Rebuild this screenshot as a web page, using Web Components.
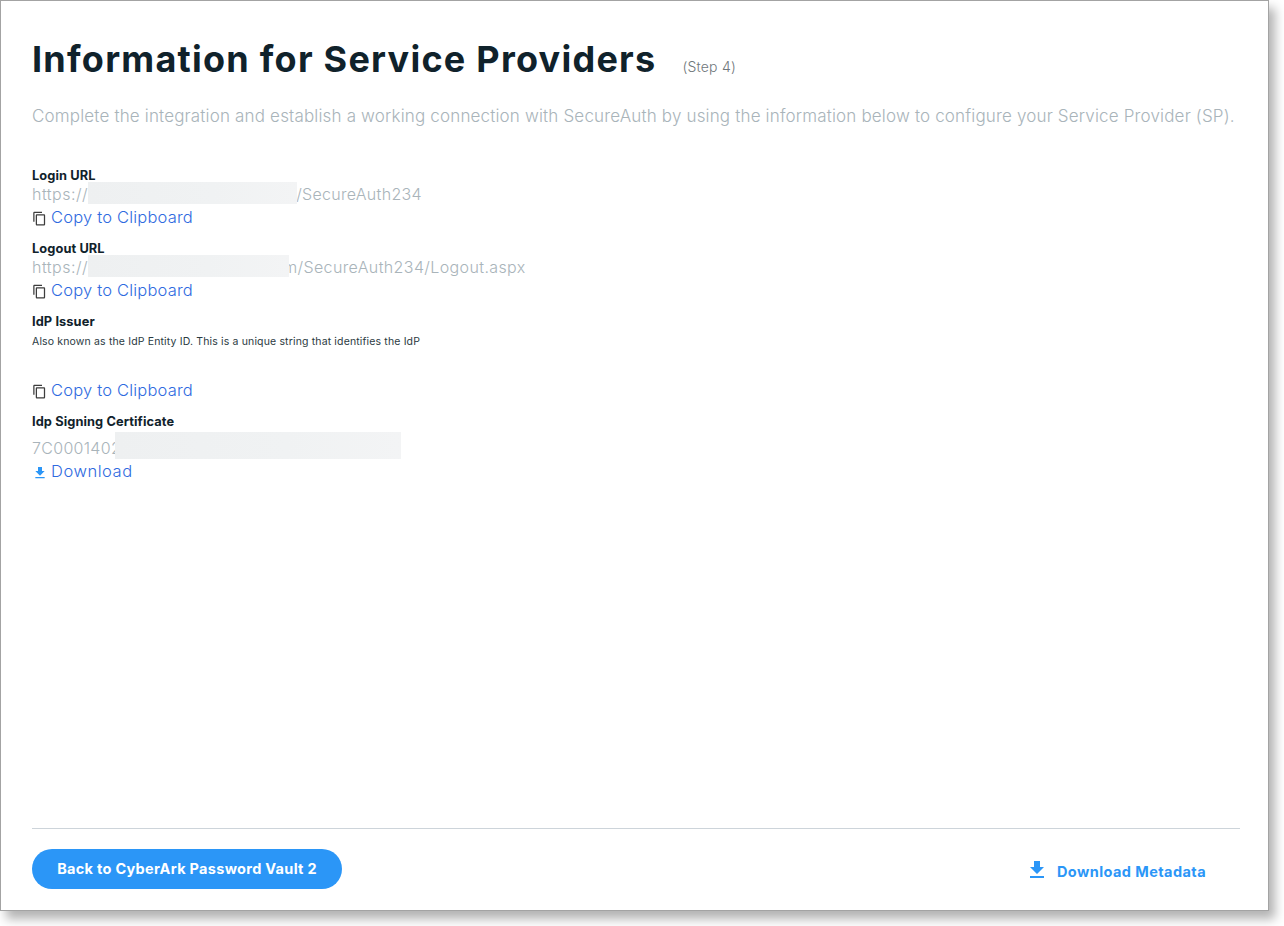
<!DOCTYPE html>
<html>
<head>
<meta charset="utf-8">
<title>Information for Service Providers</title>
<style>
  html, body { margin: 0; padding: 0; background: #fff; }
  body { height: 926px; font-family: Inter, "Liberation Sans", sans-serif; }
</style>
</head>
<body>
<sp-page>
  <span slot="title">Information for Service Providers</span>
  <span slot="step">(Step 4)</span>
  <span slot="intro">Complete the integration and establish a working connection with SecureAuth by using the information below to configure your Service Provider (SP).</span>

  <sp-field label="Login URL">
    <sp-value><span style="letter-spacing:.5px">https://</span><sp-blur width="209" left="56"></sp-blur><span style="margin-left:208px">/SecureAuth234</span></sp-value>
    <sp-link icon="copy">Copy to Clipboard</sp-link>
  </sp-field>
  <sp-field label="Logout URL">
    <sp-value><span style="letter-spacing:.5px">https://</span><sp-blur width="201" left="56"></sp-blur><span style="margin-left:195px;letter-spacing:.38px">m/SecureAuth234/Logout.aspx</span></sp-value>
    <sp-link icon="copy">Copy to Clipboard</sp-link>
  </sp-field>
  <sp-field label="IdP Issuer" hint="Also known as the IdP Entity ID. This is a unique string that identifies the IdP">
    <sp-value empty></sp-value>
    <sp-link icon="copy">Copy to Clipboard</sp-link>
  </sp-field>
  <sp-field label="Idp Signing Certificate" gap>
    <sp-value><span style="letter-spacing:.3px">7C0001402</span><sp-blur width="286" left="83" tall></sp-blur></sp-value>
    <sp-link icon="download" style="letter-spacing:.55px">Download</sp-link>
  </sp-field>

  <sp-button slot="back">Back to CyberArk Password Vault 2</sp-button>
  <sp-link slot="meta" icon="download" big>Download Metadata</sp-link>
</sp-page>

<script>
// icon paths
const ICONS = {
  copy: "M16 1H4c-1.1 0-2 .9-2 2v14h2V3h12V1zm3 4H8c-1.1 0-2 .9-2 2v14c0 1.1.9 2 2 2h11c1.1 0 2-.9 2-2V7c0-1.1-.9-2-2-2zm0 16H8V7h11v14z",
  download: "M19 9h-4V3H9v6H5l7 7 7-7zM5 18v2h14v-2H5z"
};

// outer card with header, form area and footer
class SpPage extends HTMLElement {
  constructor() {
    super();
    this.attachShadow({ mode: "open" });
    this.shadowRoot.innerHTML = `
      <style>
        :host {
          display: flex;
          flex-direction: column;
          box-sizing: border-box;
          width: 1269px;
          height: 911px;
          padding: 36px 28px 21px 31px;
          background: #fff;
          border: 1px solid #a3a3a3;
          box-shadow: 6px 8px 10px rgba(0,0,0,.3);
        }
        header { display: flex; align-items: baseline; height: 44px; line-height: 44px; }
        h1 { margin: 0; font-size: 36px; font-weight: 700; color: #10222b; letter-spacing: 1.25px; }
        .step { margin-left: 26px; font-size: 14px; font-weight: 300; color: #6f777b; letter-spacing: .2px; }
        p { margin: 23px 0 38px; font-size: 17px; font-weight: 300; line-height: 24px; color: #a9b4ba; white-space: nowrap; letter-spacing: 0.165px; }
        footer {
          margin-top: auto;
          display: flex;
          justify-content: space-between;
          align-items: flex-start;
          border-top: 1px solid #cdd4da;
          padding-top: 20px;
        }
        .meta { margin: 10px 34px 0 0; }
      </style>
      <header>
        <h1><slot name="title"></slot></h1>
        <span class="step"><slot name="step"></slot></span>
      </header>
      <p><slot name="intro"></slot></p>
      <main><slot></slot></main>
      <footer>
        <slot name="back"></slot>
        <div class="meta"><slot name="meta"></slot></div>
      </footer>`;
  }
}

// one labelled block
class SpField extends HTMLElement {
  constructor() {
    super();
    this.attachShadow({ mode: "open" });
  }
  connectedCallback() {
    const hint = this.getAttribute("hint");
    this.shadowRoot.innerHTML = `
      <style>
        :host { display: block; margin-bottom: 10px; }
        .label { font-size: 12.8px; font-weight: 700; padding-top: 1px; line-height: 17px; color: #10222b; letter-spacing: .1px; }
        .hint { font-size: 10.5px; line-height: 19px; margin-top: 2px; color: #2b3a42; letter-spacing: .15px; }
        :host([gap]) .label { margin-bottom: 8px; }
      </style>
      <div class="label">${this.getAttribute("label")}</div>
      ${hint ? `<div class="hint">${hint}</div>` : ""}
      <slot></slot>`;
  }
}

// grey read-only value line
class SpValue extends HTMLElement {
  constructor() {
    super();
    this.attachShadow({ mode: "open" });
    this.shadowRoot.innerHTML = `
      <style>
        :host {
          display: block;
          position: relative;
          height: 21px;
          font-size: 16px;
          font-weight: 300;
          line-height: 20px;
          color: #a9b4ba;
          white-space: nowrap;
          letter-spacing: .3px;
        }
        :host([empty]) { height: 27px; }
      </style>
      <slot></slot>`;
  }
}

// smudged patch that hides part of a value
class SpBlur extends HTMLElement {
  constructor() {
    super();
    this.attachShadow({ mode: "open" });
    this.shadowRoot.innerHTML = `
      <style>
        :host {
          position: absolute;
          top: -2px;
          height: 22px;
          background: linear-gradient(90deg, #eef0f1, #f0f2f3 60%, #f3f4f5);
        }
        :host([tall]) { top: -6px; height: 27px; }
      </style>`;
  }
  connectedCallback() {
    this.style.left = this.getAttribute("left") + "px";
    this.style.width = this.getAttribute("width") + "px";
  }
}

// blue action link with a leading icon
class SpLink extends HTMLElement {
  constructor() {
    super();
    this.attachShadow({ mode: "open" });
  }
  connectedCallback() {
    const name = this.getAttribute("icon");
    this.shadowRoot.innerHTML = `
      <style>
        :host {
          display: flex;
          align-items: center;
          gap: 3px;
          height: 24px;
          font-size: 16.5px;
          font-weight: 300;
          color: #2f6ae0;
          letter-spacing: .2px;
          white-space: nowrap;
          cursor: pointer;
        }
        svg { width: 16px; height: 16px; fill: #333; flex: none; position: relative; top: 1px; }
        :host([icon="copy"]) { gap: 4px; }
        :host([icon="copy"]) svg { width: 15px; height: 15px; fill: #3d3d3d; top: 1.5px; }
        :host([icon="download"]) svg { fill: #2b96f7; top: 2px; }
        :host([big]) { gap: 8px; font-size: 14.5px; font-weight: 700; color: #2b96f7; letter-spacing: .43px; }
        :host([big]) svg { width: 24px; height: 24px; top: -1px; }
      </style>
      <svg viewBox="0 0 24 24"><path d="${ICONS[name]}"/></svg>
      <span><slot></slot></span>`;
  }
}

// pill button
class SpButton extends HTMLElement {
  constructor() {
    super();
    this.attachShadow({ mode: "open" });
    this.shadowRoot.innerHTML = `
      <style>
        :host {
          display: inline-flex;
          align-items: center;
          justify-content: center;
          box-sizing: border-box;
          width: 310px;
          height: 40px;
          padding-bottom: 2px;
          border-radius: 20px;
          background: #2b96f7;
          color: #fff;
          font-size: 14.5px;
          font-weight: 700;
          letter-spacing: .3px;
          white-space: nowrap;
          cursor: pointer;
        }
      </style>
      <slot></slot>`;
  }
}

customElements.define("sp-page", SpPage);
customElements.define("sp-field", SpField);
customElements.define("sp-value", SpValue);
customElements.define("sp-blur", SpBlur);
customElements.define("sp-link", SpLink);
customElements.define("sp-button", SpButton);
</script>
</body>
</html>
